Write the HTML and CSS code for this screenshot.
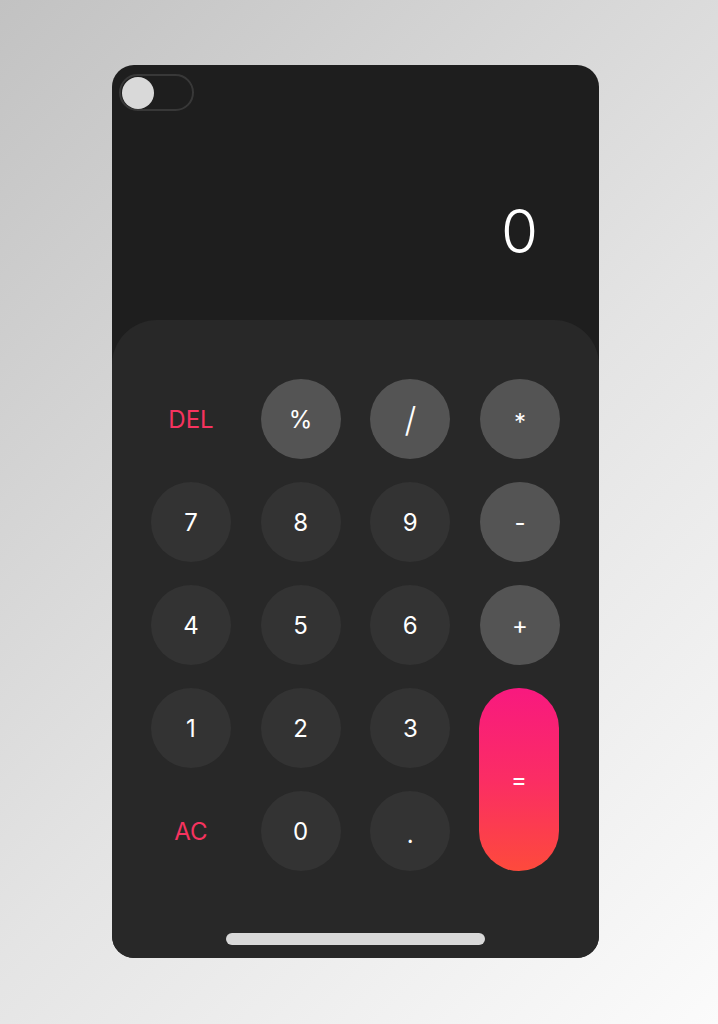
FILE: index.html
```html
<!DOCTYPE html>
<html>
<head>
<meta charset="utf-8">
<link rel="stylesheet" href="styles.css">
</head>
<body>
<div class="page">
  <div class="phone">
    <div class="screen">
      <div class="toggle"><div class="knob"></div></div>
      <div class="display">0</div>
    </div>
    <div class="pad">
      <div class="keys">
        <div class="key text">DEL</div>
        <div class="key op">%</div>
        <div class="key op slash">/</div>
        <div class="key op star">*</div>
        <div class="key">7</div>
        <div class="key">8</div>
        <div class="key">9</div>
        <div class="key op">-</div>
        <div class="key">4</div>
        <div class="key">5</div>
        <div class="key">6</div>
        <div class="key op">+</div>
        <div class="key">1</div>
        <div class="key">2</div>
        <div class="key">3</div>
        <div class="key equals">=</div>
        <div class="key text">AC</div>
        <div class="key">0</div>
        <div class="key dot">.</div>
      </div>
      <div class="home"></div>
    </div>
  </div>
</div>
</body>
</html>
```
FILE: styles.css
```css
html, body {
  margin: 0;
  padding: 0;
}
body {
  width: 718px;
  height: 1024px;
  background: linear-gradient(135deg, #c2c2c2 0%, #e4e4e4 55%, #fbfbfb 100%);
  font-family: "Inter", "Noto Sans", sans-serif;
  overflow: hidden;
}
.page {
  padding: 65px 0 0 112px;
}
.phone {
  width: 487px;
  height: 893px;
  border-radius: 22px;
  background: #1e1e1e;
  overflow: hidden;
  display: flex;
  flex-direction: column;
}
.screen {
  height: 255px;
  display: flex;
  flex-direction: column;
}
.toggle {
  margin: 9px 0 0 7px;
  width: 70px;
  height: 33px;
  border: 2px solid #383838;
  border-radius: 20px;
  display: flex;
  align-items: center;
  padding-left: 1px;
}
.knob {
  width: 32px;
  height: 32px;
  border-radius: 50%;
  background: #d9d9d9;
}
.display {
  margin-top: 90px;
  align-self: flex-end;
  padding-right: 61px;
  color: #ffffff;
  font-size: 60px;
  font-weight: 300;
  line-height: 60px;
}
.pad {
  flex: 1;
  background: #282828;
  border-radius: 45px 45px 0 0;
  padding: 59px 39px 0 39px;
  display: flex;
  flex-direction: column;
  align-items: center;
}
.keys {
  width: 409px;
  display: grid;
  grid-template-columns: 80px 80px 80px 80px;
  grid-auto-rows: 80px;
  justify-content: space-between;
  row-gap: 23px;
}
.key {
  width: 80px;
  height: 80px;
  border-radius: 50%;
  background: #333333;
  color: #ffffff;
  font-size: 24px;
  display: flex;
  align-items: center;
  justify-content: center;
}
.key.op {
  background: #545454;
}
.key.slash {
  font-size: 34px;
  font-weight: 300;
}
.key.star {
  font-size: 24px;
  padding-top: 6px;
  box-sizing: border-box;
}
.key.dot {
  padding-top: 6px;
  box-sizing: border-box;
}
.key.text {
  background: transparent;
  color: #f6335f;
}
.key.equals {
  grid-column: 4;
  grid-row: 4 / span 2;
  height: 183px;
  border-radius: 40px;
  background: linear-gradient(180deg, #f8197f 0%, #fb2d64 50%, #fd4a3c 100%);
  justify-self: end;
  width: 80px;
  margin-right: 1px;
}
.home {
  margin-top: 62px;
  width: 259px;
  height: 12px;
  border-radius: 6px;
  background: #d9d9d9;
  align-self: flex-start;
  margin-left: 75px;
}
```
